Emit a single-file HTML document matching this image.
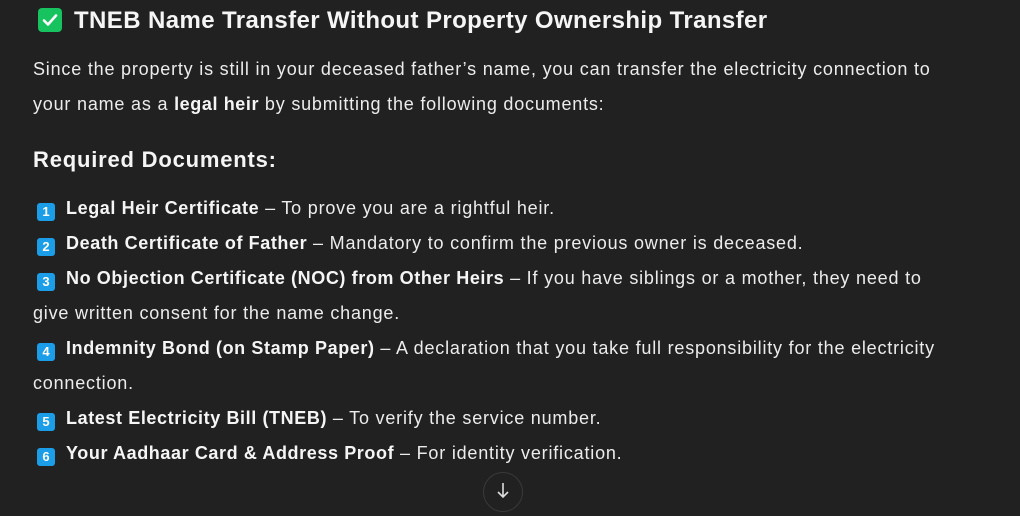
<!DOCTYPE html>
<html><head><meta charset="utf-8"><style>
html,body{margin:0;padding:0;background:#212121;width:1020px;height:495px;overflow:hidden}
body{font-family:"Liberation Sans",sans-serif;color:#ececec;font-size:18px;letter-spacing:0.8px}
.l{position:absolute;left:33px;white-space:nowrap;line-height:35px}
b{font-weight:bold;color:#f5f5f5;letter-spacing:0.6px}
.k{display:inline-block;width:18px;height:18px;border-radius:3px;background:#1b9de8;color:#fff;font-weight:bold;font-size:13px;line-height:18px;text-align:center;vertical-align:-2px;margin:0 11px 0 4px;letter-spacing:0}
.chk{position:absolute;left:38px;top:8px;width:24px;height:24px;border-radius:4px;background:#16c35f}
.arr{position:absolute;left:483px;top:472px;width:38px;height:38px;border-radius:50%;border:1px solid #3a3a3a;background:#212121}
</style></head><body>
<div class="chk"><svg width="24" height="24" viewBox="0 0 24 24"><path d="M6 12.5l4 4 8-9" stroke="#fff" stroke-width="2.6" fill="none" stroke-linecap="round" stroke-linejoin="round"/></svg></div>
<div class="l" style="left:74px;top:3px;font-size:24px;font-weight:bold;color:#f5f5f5;letter-spacing:0.4px">TNEB Name Transfer Without Property Ownership Transfer</div>
<div class="l" style="top:52px">Since the property is still in your deceased father’s name, you can transfer the electricity connection to</div>
<div class="l" style="top:87px">your name as a <b>legal heir</b> by submitting the following documents:</div>
<div class="l" style="top:142px;font-size:22px;font-weight:bold;color:#f5f5f5;letter-spacing:0.8px">Required Documents:</div>
<div class="l" style="top:191px"><span class="k">1</span><b>Legal Heir Certificate</b> – To prove you are a rightful heir.</div>
<div class="l" style="top:226px"><span class="k">2</span><b>Death Certificate of Father</b> – Mandatory to confirm the previous owner is deceased.</div>
<div class="l" style="top:261px"><span class="k">3</span><b>No Objection Certificate (NOC) from Other Heirs</b> – If you have siblings or a mother, they need to</div>
<div class="l" style="top:296px">give written consent for the name change.</div>
<div class="l" style="top:331px"><span class="k">4</span><b>Indemnity Bond (on Stamp Paper)</b> – A declaration that you take full responsibility for the electricity</div>
<div class="l" style="top:366px">connection.</div>
<div class="l" style="top:401px"><span class="k">5</span><b>Latest Electricity Bill (TNEB)</b> – To verify the service number.</div>
<div class="l" style="top:436px"><span class="k">6</span><b>Your Aadhaar Card &amp; Address Proof</b> – For identity verification.</div>
<div class="arr"><svg width="38" height="38" viewBox="0 0 38 38"><path d="M19 10v14M14 19l5 5 5-5" stroke="#ddd" stroke-width="1.6" fill="none"/></svg></div>
</body></html>
